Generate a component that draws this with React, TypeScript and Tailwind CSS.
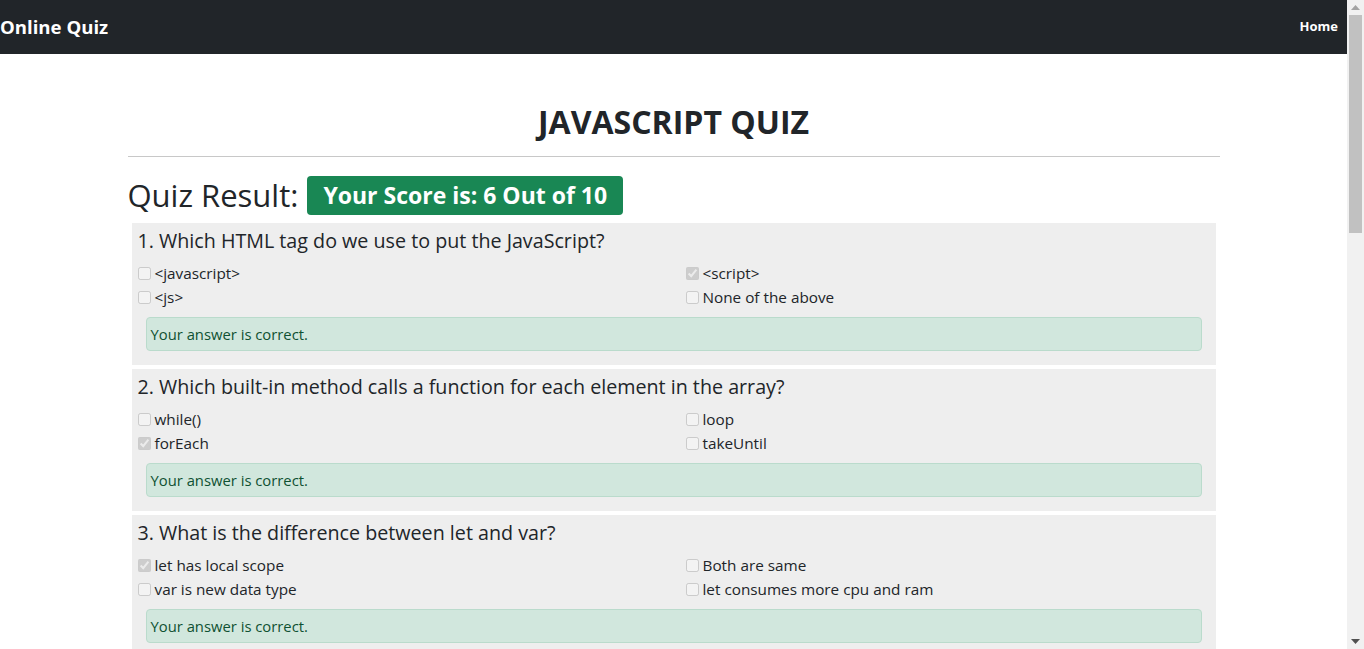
import React from 'react';

interface Question {
  title: string;
  options: string[];
  picked: number;
  correct: boolean;
}

const questions: Question[] = [
  {
    title: '1. Which HTML tag do we use to put the JavaScript?',
    options: ['<javascript>', '<script>', '<js>', 'None of the above'],
    picked: 1,
    correct: true
  },
  {
    title: '2. Which built-in method calls a function for each element in the array?',
    options: ['while()', 'loop', 'forEach', 'takeUntil'],
    picked: 2,
    correct: true
  },
  {
    title: '3. What is the difference between let and var?',
    options: ['let has local scope', 'Both are same', 'var is new data type', 'let consumes more cpu and ram'],
    picked: 0,
    correct: true
  },
  {
    title: '4. Which operator is used to assign a value to a variable?',
    options: ['*', '-', '=', 'x'],
    picked: 0,
    correct: false
  },
  {
    title: '5. How do you write "Hello World" in an alert box?',
    options: ['msg("Hello World")', 'alert("Hello World")', 'msgBox("Hello World")', 'alertBox("Hello World")'],
    picked: 1,
    correct: true
  },
  {
    title: '6. How do you create a function in JavaScript?',
    options: ['function myFunction()', 'function:myFunction()', 'function = myFunction()', 'None of the above'],
    picked: 0,
    correct: true
  },
  {
    title: '7. How does a FOR loop start?',
    options: ['for (i = 0; i <= 5)', 'for i = 1 to 5', 'for (i = 0; i <= 5; i++)', 'for (i <= 5; i++)'],
    picked: 1,
    correct: false
  },
  {
    title: '8. How can you add a comment in a JavaScript?',
    options: ['<!--This is a comment-->', '//This is a comment', "'This is a comment", 'None of the above'],
    picked: 1,
    correct: true
  },
  {
    title: '9. What is the correct way to write a JavaScript array?',
    options: ['var colors = "red", "green"', 'var colors = ["red", "green"]', 'var colors = (1:"red", 2:"green")', 'var colors = 1 = ("red")'],
    picked: 0,
    correct: false
  },
  {
    title: '10. Which event occurs when the user clicks on an HTML element?',
    options: ['onchange', 'onclick', 'onmouseover', 'onmouseclick'],
    picked: 3,
    correct: false
  }
];

const QuestionCard: React.FC<{ q: Question }> = ({ q }) => {
  return <div className="bg-[#eeeeee] p-[6px]">
      <h5 className="text-[19.7px] leading-[24px] font-medium text-[#212529]">{q.title}</h5>
      <div className="grid grid-cols-[548px_1fr] mt-[8px]">
        {q.options.map((opt, i) => <label key={i} className="flex items-center h-[24px] text-[15.3px] text-[#212529]">
            <input type="checkbox" disabled checked={i === q.picked} readOnly className="w-[13px] h-[13px] mr-[4px]" />
            <span>{opt}</span>
          </label>)}
      </div>
      {q.correct ? <div className="mx-[8px] my-[8px] h-[34px] flex items-center px-[4px] bg-[#d1e7dd] border border-[#badbcc] rounded-[4px] text-[#0f5132] text-[14.8px]">
          Your answer is correct.
        </div> : <div className="mx-[8px] my-[8px] h-[34px] flex items-center px-[4px] bg-[#f8d7da] border border-[#f5c2c7] rounded-[4px] text-[#842029] text-[14.8px]">
          Your answer is wrong.
        </div>}
    </div>;
};

// window scrollbar strip as it appears in the screenshot
const ScrollBar = () => {
  return <div className="w-[17px] h-screen bg-[#f1f1f1] flex flex-col items-center shrink-0">
      <div className="h-[15px] flex items-center justify-center">
        <svg width="9" height="5" viewBox="0 0 9 5"><path d="M0 5 L4.5 0 L9 5 Z" fill="#a3a3a3" /></svg>
      </div>
      <div className="w-[13px] h-[218px] bg-[#c1c1c1]" />
      <div className="flex-1" />
      <div className="h-[15px] flex items-center justify-center">
        <svg width="9" height="5" viewBox="0 0 9 5"><path d="M0 0 L9 0 L4.5 5 Z" fill="#505050" /></svg>
      </div>
    </div>;
};

export default function App() {
  return <div className="flex h-screen overflow-hidden bg-white font-['Open_Sans',sans-serif] text-[#212529]">
      <div className="w-[1347px] shrink-0 overflow-hidden">
        <nav className="h-[54px] bg-[#212529] flex items-center justify-between pr-[9px]">
          <span className="text-white text-[18.6px] font-bold">Online Quiz</span>
          <span className="text-white text-[13px] font-bold">Home</span>
        </nav>
        <div className="w-[1092px] mx-auto">
          <h1 className="text-center text-[32px] font-bold leading-[38px] pt-[49px] pb-[15px]">JAVASCRIPT QUIZ</h1>
          <hr className="border-0 border-t border-[#c8c8c8]" />
          <div className="flex items-center mt-[18px] mb-[8px]">
            <span className="text-[31px] leading-[40px]">Quiz Result:</span>
            <span className="ml-[9px] bg-[#198754] text-white font-bold text-[23px] leading-[39px] px-[16px] rounded-[4px]">Your Score is: 6 Out of 10</span>
          </div>
          <div className="mx-[4px] flex flex-col gap-[4px] pb-[20px]">
            {questions.map((q, i) => <QuestionCard key={i} q={q} />)}
          </div>
        </div>
      </div>
      <ScrollBar />
    </div>;
}
